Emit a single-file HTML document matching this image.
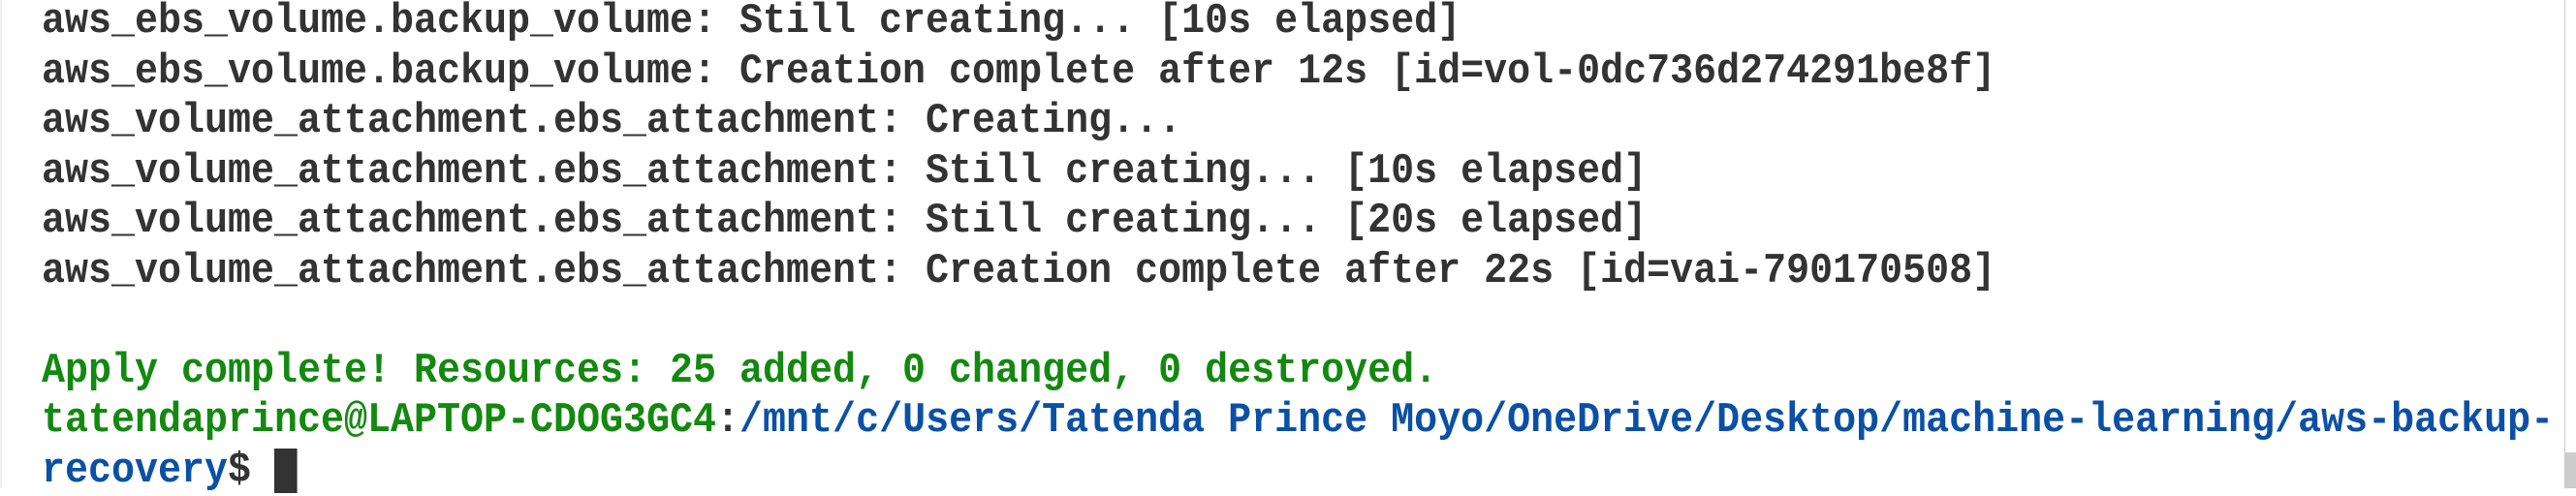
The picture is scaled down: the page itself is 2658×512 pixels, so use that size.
<!DOCTYPE html>
<html><head><meta charset="utf-8"><style>
html,body{margin:0;padding:0;background:#fff;width:2658px;height:504px;overflow:hidden;}
.t{position:absolute;left:43px;top:-3px;font-family:"Liberation Mono",monospace;font-size:44px;line-height:51.5px;color:#333;font-weight:bold;white-space:pre;transform:scaleX(0.909);transform-origin:0 0;}
.g{color:#13890f}.b{color:#0a50a6}
.cur{display:inline-block;width:26.4px;height:46px;background:#333;vertical-align:-12px;}
.rb{position:absolute;left:2646px;top:0;width:1px;height:504px;background:#ccc;}
.sb{position:absolute;left:2647px;top:467px;width:11px;height:37px;background:#cdcdcd;}
.lb{position:absolute;left:0;top:0;width:2px;height:504px;background:#f0f0f0;}
</style></head><body>
<div class="lb"></div>
<div class="t">aws_ebs_volume.backup_volume: Still creating... [10s elapsed]
aws_ebs_volume.backup_volume: Creation complete after 12s [id=vol-0dc736d274291be8f]
aws_volume_attachment.ebs_attachment: Creating...
aws_volume_attachment.ebs_attachment: Still creating... [10s elapsed]
aws_volume_attachment.ebs_attachment: Still creating... [20s elapsed]
aws_volume_attachment.ebs_attachment: Creation complete after 22s [id=vai-790170508]

<span class="g">Apply complete! Resources: 25 added, 0 changed, 0 destroyed.</span>
<span class="g">tatendaprince@LAPTOP-CDOG3GC4</span>:<span class="b">/mnt/c/Users/Tatenda Prince Moyo/OneDrive/Desktop/machine-learning/aws-backup-</span>
<span class="b">recovery</span>$ <span class="cur"></span></div>
<div class="rb"></div><div class="sb"></div>
</body></html>
